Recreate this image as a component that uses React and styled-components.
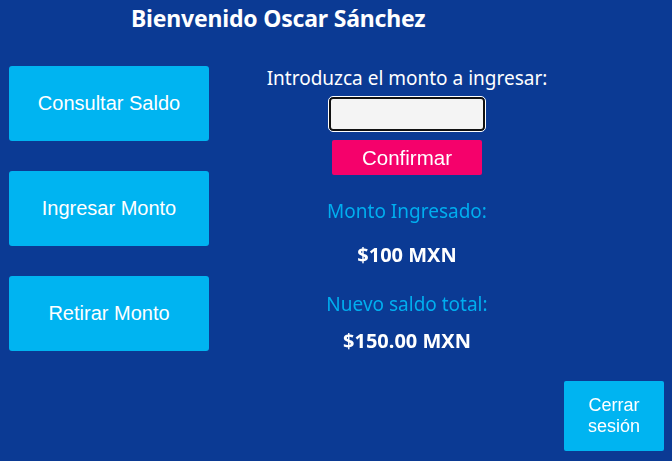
import React from "react";
import styled, { createGlobalStyle } from "styled-components";

const GlobalStyle = createGlobalStyle`
    html, body {
        margin: 0;
        padding: 0;
        background: #0b3a94;
    }
    body {
        font-family: "Noto Sans", "Open Sans", sans-serif;
    }
`;

const Page = styled.div`
    width: 672px;
    height: 461px;
    background: #0b3a94;
    overflow: hidden;
`;

const Title = styled.h1`
    margin: 0;
    padding-left: 131px;
    font-size: 23px;
    line-height: 36px;
    font-weight: 700;
    color: #ffffff;
    letter-spacing: -0.2px;
`;

const Main = styled.div`
    display: flex;
    align-items: flex-start;
    margin-top: 30px;
`;

const Sidebar = styled.div`
    display: flex;
    flex-direction: column;
    gap: 30px;
    margin-left: 9px;
    width: 200px;
`;

const MenuButton = styled.button`
    width: 200px;
    height: 75px;
    border: none;
    border-radius: 3px;
    background: #00b4f1;
    color: #ffffff;
    font-family: "Liberation Sans", Arial, sans-serif;
    font-size: 20px;
    cursor: pointer;
`;

const Panel = styled.div`
    width: 396px;
    display: flex;
    flex-direction: column;
    align-items: center;
    text-align: center;
`;

const Label = styled.p`
    margin: ${(p) => p.$m || "0"};
    font-size: 19px;
    line-height: 24px;
    color: ${(p) => (p.$accent ? "#00aeef" : "#ffffff")};
`;

const Amount = styled.p`
    margin: ${(p) => p.$m || "0"};
    font-size: 20px;
    line-height: 24px;
    font-weight: 700;
    color: #ffffff;
`;

const AmountInput = styled.input`
    box-sizing: border-box;
    width: 156px;
    height: 34px;
    margin-top: 7px;
    border: 2px solid #111111;
    border-radius: 4px;
    outline: 1px solid #ffffff;
    background: #f4f4f4;
    text-align: center;
    font-size: 16px;
`;

const ConfirmButton = styled.button`
    width: 150px;
    height: 35px;
    margin-top: 9px;
    border: none;
    border-radius: 2px;
    background: #f5016b;
    color: #ffffff;
    font-family: "Liberation Sans", Arial, sans-serif;
    font-size: 20.5px;
    cursor: pointer;
`;

const Footer = styled.div`
    display: flex;
    justify-content: flex-end;
    padding-right: 8px;
    margin-top: 28px;
`;

const LogoutButton = styled.button`
    width: 100px;
    height: 70px;
    border: none;
    border-radius: 2px;
    background: #00b4f1;
    color: #ffffff;
    font-family: "Liberation Sans", Arial, sans-serif;
    font-size: 18px;
    line-height: 21px;
    cursor: pointer;
`;

function App() {
    return (
        <Page>
            <GlobalStyle />
            <Title>Bienvenido Oscar Sánchez</Title>
            <Main>
                <Sidebar>
                    <MenuButton>Consultar Saldo</MenuButton>
                    <MenuButton>Ingresar Monto</MenuButton>
                    <MenuButton>Retirar Monto</MenuButton>
                </Sidebar>
                <Panel>
                    <Label>Introduzca el monto a ingresar:</Label>
                    <AmountInput type="text" autoFocus />
                    <ConfirmButton>Confirmar</ConfirmButton>
                    <Label $accent $m="24px 0 0">Monto Ingresado:</Label>
                    <Amount $m="20px 0 0">$100 MXN</Amount>
                    <Label $accent $m="25px 0 0">Nuevo saldo total:</Label>
                    <Amount $m="13px 0 0">$150.00 MXN</Amount>
                </Panel>
            </Main>
            <Footer>
                <LogoutButton>Cerrar sesión</LogoutButton>
            </Footer>
        </Page>
    );
}

export default App;
